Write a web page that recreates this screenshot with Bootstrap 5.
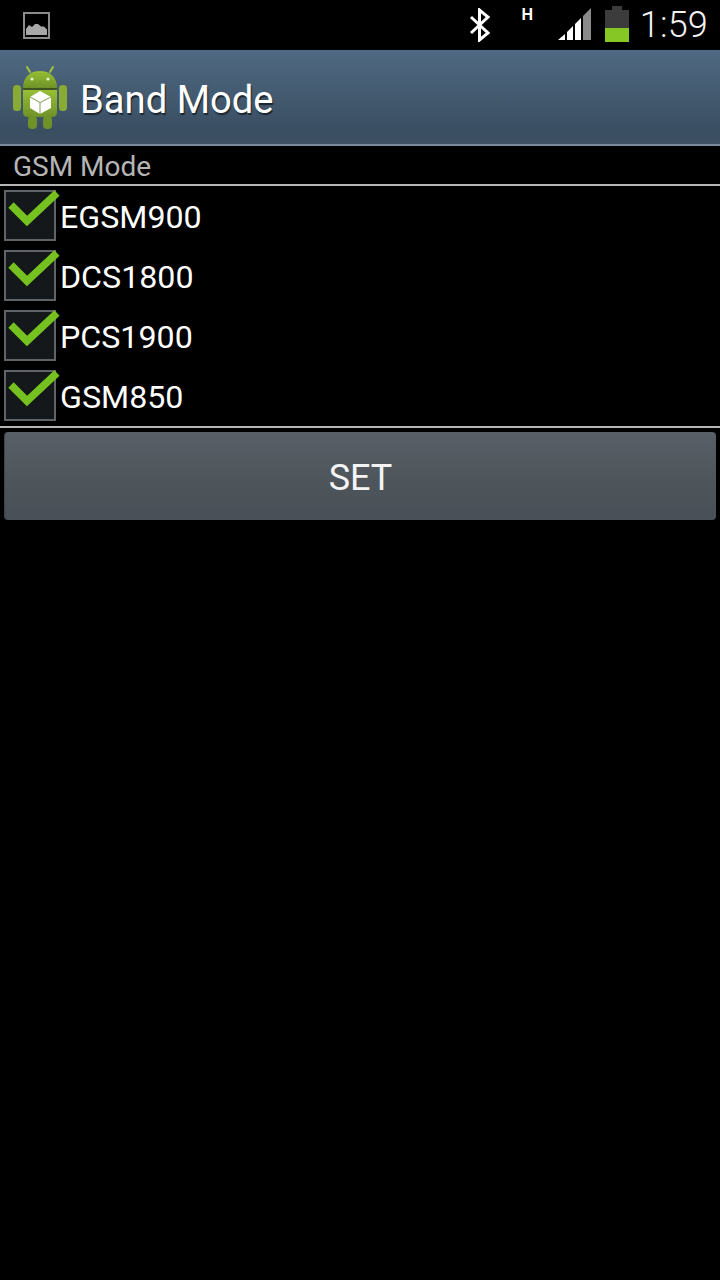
<!DOCTYPE html>
<html lang="en">
<head>
<meta charset="utf-8">
<title>Band Mode</title>
<link href="https://cdn.jsdelivr.net/npm/bootstrap@5.3.0/dist/css/bootstrap.min.css" rel="stylesheet">
<style>
html, body { background: #000; }
body { width: 720px; height: 1280px; overflow: hidden; font-family: Roboto, "Liberation Sans", sans-serif; color: #fff; }
.status-row { height: 50px; background: #000; padding: 0 12px 0 23px; }
.status-clock { font-size: 36px; line-height: 50px; color: #f2f2f2; font-weight: 300; margin-left: 11px; letter-spacing: .2px; }
.bar-head { height: 96px; background: linear-gradient(#4f6a82, #3a4e62 85%, #3d5064); border-bottom: 2px solid #7b8b99; padding-left: 12px; }
.head-title { font-size: 38.2px; line-height: 1; color: #fff; margin-left: 12px; margin-top: 7px; text-shadow: 1px 2px 1px #1a2530; }
.group-label { height: 40px; line-height: 42px; padding-left: 13px; font-size: 28px; color: #b5b5b5; border-bottom: 2px solid #b5b5b5; }
.band-list { padding-top: 4px; height: 240px; }
.band-row { height: 60px; padding-left: 4px; }
.tick-box { position: relative; width: 52px; height: 51px; background: #15181b; border: 2px solid #5e6467; flex: none; }
.tick-box svg { position: absolute; left: 3px; top: -3px; overflow: visible; }
.band-name { font-size: 32.2px; line-height: 1; margin-left: 4px; margin-top: 11px; color: #fff; }
.rule-line { height: 2px; background: #b5b5b5; }
.set-wrap { padding: 4px 4px 0; }
.set-btn { width: 100%; height: 88px; border: 0; border-left: 1px solid #3d464c; border-radius: 4px; background: linear-gradient(#585f66, #4e555b 55%, #484f56); color: #f4f4f4; font-size: 36px; line-height: 1; padding: 4px 0 0; }
.set-btn:hover, .set-btn:active { background: linear-gradient(#585f66, #4e555b 55%, #484f56); color: #f4f4f4; }
.gap-bt { margin-left: 31px; }
.gap-sig { margin-left: 6px; }
.gap-bat { margin-left: 13px; }
</style>
</head>
<body>
<div class="status-row d-flex align-items-center">
  <svg width="27" height="27" viewBox="0 0 27 27" aria-label="Picture notification">
    <rect x="1" y="1" width="25" height="25" fill="#000" stroke="#8c8c8c" stroke-width="2"/>
    <path d="M3 23V17L6 13L9 15L12 12L15 12L18 14.5L21 14.5L24 17.5V23Z" fill="#a8a8a8"/>
  </svg>
  <div class="ms-auto d-flex align-items-center">
    <svg width="22" height="34" viewBox="0 0 22 34" aria-label="Bluetooth">
      <path d="M2 9L19 25L10.5 32V2L19 9L2 25" fill="none" stroke="#fff" stroke-width="3"/>
    </svg>
    <svg class="gap-bt" width="30" height="40" viewBox="0 0 30 40" aria-label="Data H">
      <text x="-0.5" y="15" font-family="Liberation Sans, sans-serif" font-size="16" font-weight="700" fill="#fff">H</text>
    </svg>
    <svg class="gap-sig" width="34" height="34" viewBox="0 0 34 34" aria-label="Signal">
      <path d="M0 32L7 26V32Z M9 24L15 18V32H9Z M17 16L23 10V32H17Z" fill="#fff"/>
      <path d="M25 8L33 0V32H25Z" fill="#8a8a8a"/>
    </svg>
    <svg class="gap-bat" width="24" height="38" viewBox="0 0 24 38" aria-label="Battery">
      <path d="M7 0H17V4H24V22H0V4H7Z" fill="#3c3c3c"/>
      <rect y="22" width="24" height="14" fill="#86c625"/>
    </svg>
    <span class="status-clock">1:59</span>
  </div>
</div>

<div class="bar-head d-flex align-items-center">
  <svg width="56" height="66" viewBox="0 0 56 66" aria-label="Android app icon">
    <defs><linearGradient id="droid" x1="0" y1="0" x2="0" y2="1"><stop offset="0" stop-color="#97bf35"/><stop offset="1" stop-color="#6f9228"/></linearGradient></defs>
    <path d="M18 8L15 3M38 8L41 3" stroke="#a4c639" stroke-width="2" stroke-linecap="round"/>
    <path d="M11 24C11 13 18 7 28 7S45 13 45 24Z" fill="url(#droid)"/>
    <circle cx="20" cy="15" r="1.6" fill="#e8f2c8"/><circle cx="36" cy="15" r="1.6" fill="#e8f2c8"/>
    <path d="M11 26H45V48Q45 53 40 53H16Q11 53 11 48Z" fill="url(#droid)"/>
    <rect x="11" y="24" width="34" height="2" fill="#3f5320"/>
    <rect x="1" y="21" width="8" height="26" rx="3.5" fill="#87ab33"/>
    <rect x="47" y="21" width="8" height="26" rx="3.5" fill="#87ab33"/>
    <rect x="16" y="52" width="9" height="13" rx="4" fill="#6f9228"/>
    <rect x="31" y="52" width="9" height="13" rx="4" fill="#6f9228"/>
    <path d="M28 27L39 33V44L28 50L18 44V33Z" fill="#fff"/>
    <path d="M18 33L28 38.5L39 33M28 38.5V50" fill="none" stroke="#7f9a55" stroke-width="1"/>
  </svg>
  <span class="head-title">Band Mode</span>
</div>

<div class="group-label">GSM Mode</div>

<div class="band-list">
  <div class="band-row d-flex align-items-start">
    <div class="tick-box"><svg width="50" height="38" viewBox="0 0 50 38"><path d="M2 16L18 32L48 4" fill="none" stroke="#74c11f" stroke-width="7.5"/></svg></div>
    <span class="band-name">EGSM900</span>
  </div>
  <div class="band-row d-flex align-items-start">
    <div class="tick-box"><svg width="50" height="38" viewBox="0 0 50 38"><path d="M2 16L18 32L48 4" fill="none" stroke="#74c11f" stroke-width="7.5"/></svg></div>
    <span class="band-name">DCS1800</span>
  </div>
  <div class="band-row d-flex align-items-start">
    <div class="tick-box"><svg width="50" height="38" viewBox="0 0 50 38"><path d="M2 16L18 32L48 4" fill="none" stroke="#74c11f" stroke-width="7.5"/></svg></div>
    <span class="band-name">PCS1900</span>
  </div>
  <div class="band-row d-flex align-items-start">
    <div class="tick-box"><svg width="50" height="38" viewBox="0 0 50 38"><path d="M2 16L18 32L48 4" fill="none" stroke="#74c11f" stroke-width="7.5"/></svg></div>
    <span class="band-name">GSM850</span>
  </div>
</div>
<div class="rule-line"></div>
<div class="set-wrap"><button type="button" class="btn set-btn">SET</button></div>
<script src="https://cdn.jsdelivr.net/npm/bootstrap@5.3.0/dist/js/bootstrap.bundle.min.js"></script>
</body>
</html>
